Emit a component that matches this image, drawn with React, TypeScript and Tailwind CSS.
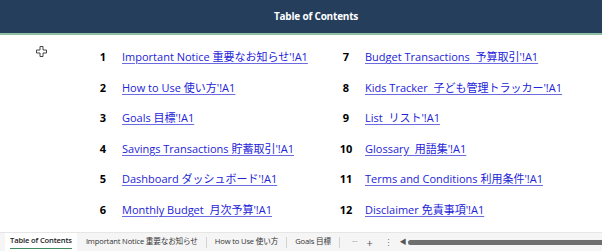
const left = [
  { n: 1, label: "Important Notice 重要なお知らせ'!A1" },
  { n: 2, label: "How to Use 使い方'!A1" },
  { n: 3, label: "Goals 目標'!A1" },
  { n: 4, label: "Savings Transactions 貯蓄取引'!A1" },
  { n: 5, label: "Dashboard ダッシュボード'!A1" },
  { n: 6, label: "Monthly Budget  月次予算'!A1" },
];

const right = [
  { n: 7, label: "Budget Transactions  予算取引'!A1" },
  { n: 8, label: "Kids Tracker  子ども管理トラッカー'!A1" },
  { n: 9, label: "List  リスト'!A1" },
  { n: 10, label: "Glossary  用語集'!A1" },
  { n: 11, label: "Terms and Conditions 利用条件'!A1" },
  { n: 12, label: "Disclaimer 免責事項'!A1" },
];

const font = "font-['Open_Sans','Noto_Sans_CJK_JP',sans-serif]";

function Entry({ n, label }: { n: number; label: string }) {
  return (
    <div className="flex h-[30.6px] items-center">
      <span className="w-[26px] flex-none text-center text-[11px] font-bold text-black">{n}</span>
      <a
        href="#"
        className="ml-[6px] whitespace-pre text-[11px] text-[#2323d8] underline decoration-[#6c6ce0] underline-offset-2"
      >
        {label}
      </a>
    </div>
  );
}

function CellCursor() {
  return (
    <svg width="11" height="11" viewBox="0 0 11 11" className="absolute left-[36px] top-[46px]">
      <path
        d="M4 0.5h3v3.5h3.5v3h-3.5v3.5h-3v-3.5h-3.5v-3h3.5z"
        fill="white"
        stroke="#444"
        strokeWidth="1"
      />
    </svg>
  );
}

export default function App() {
  return (
    <div className={`${font} relative flex h-[251px] w-[602px] flex-col overflow-hidden bg-white`}>
      <header className="flex h-[33px] items-center justify-center bg-[#243e5c] pl-[30px]">
        <h1 className="text-[10px] font-bold tracking-[-0.2px] text-white">Table of Contents</h1>
      </header>
      <div className="h-[2px] bg-[#8cc1a8]" />

      <CellCursor />

      <main className="flex flex-1 pt-[7px]">
        <div className="flex w-[333px] flex-none flex-col pl-[90px]">
          {left.map((e) => (
            <Entry key={e.n} {...e} />
          ))}
        </div>
        <div className="flex flex-none flex-col">
          {right.map((e) => (
            <Entry key={e.n} {...e} />
          ))}
        </div>
      </main>

      <footer className="flex h-[19px] flex-none items-center border-t border-[#e6e6e6] bg-[#f5f5f5] text-[7.6px] tracking-[-0.15px] text-[#333]">
        <div className="ml-[5px] flex h-full items-center bg-white px-[5px]">
          <span className="border-b-[1.5px] border-[#3f8a63] pb-[1px] font-semibold text-[#222]">
            Table of Contents
          </span>
        </div>
        <span className="ml-[9px]">Important Notice 重要なお知らせ</span>
        <span className="mx-[8px] h-[11px] w-px bg-[#d2d2d2]" />
        <span>How to Use 使い方</span>
        <span className="mx-[8px] h-[11px] w-px bg-[#d2d2d2]" />
        <span>Goals 目標</span>
        <span className="mx-[8px] h-[11px] w-px bg-[#d2d2d2]" />
        <span className="ml-[4px] text-[#555]">···</span>
        <span className="ml-[9px] text-[11px] leading-none text-[#555]">+</span>
        <span className="ml-[11px] text-[9px] leading-none text-[#777]">⋮</span>
        <span className="ml-[7px] text-[7px] text-[#555]">◀</span>
        <div className="ml-[2px] h-[5px] flex-1 rounded-l-full bg-[#6e6e6e]" />
      </footer>
    </div>
  );
}
